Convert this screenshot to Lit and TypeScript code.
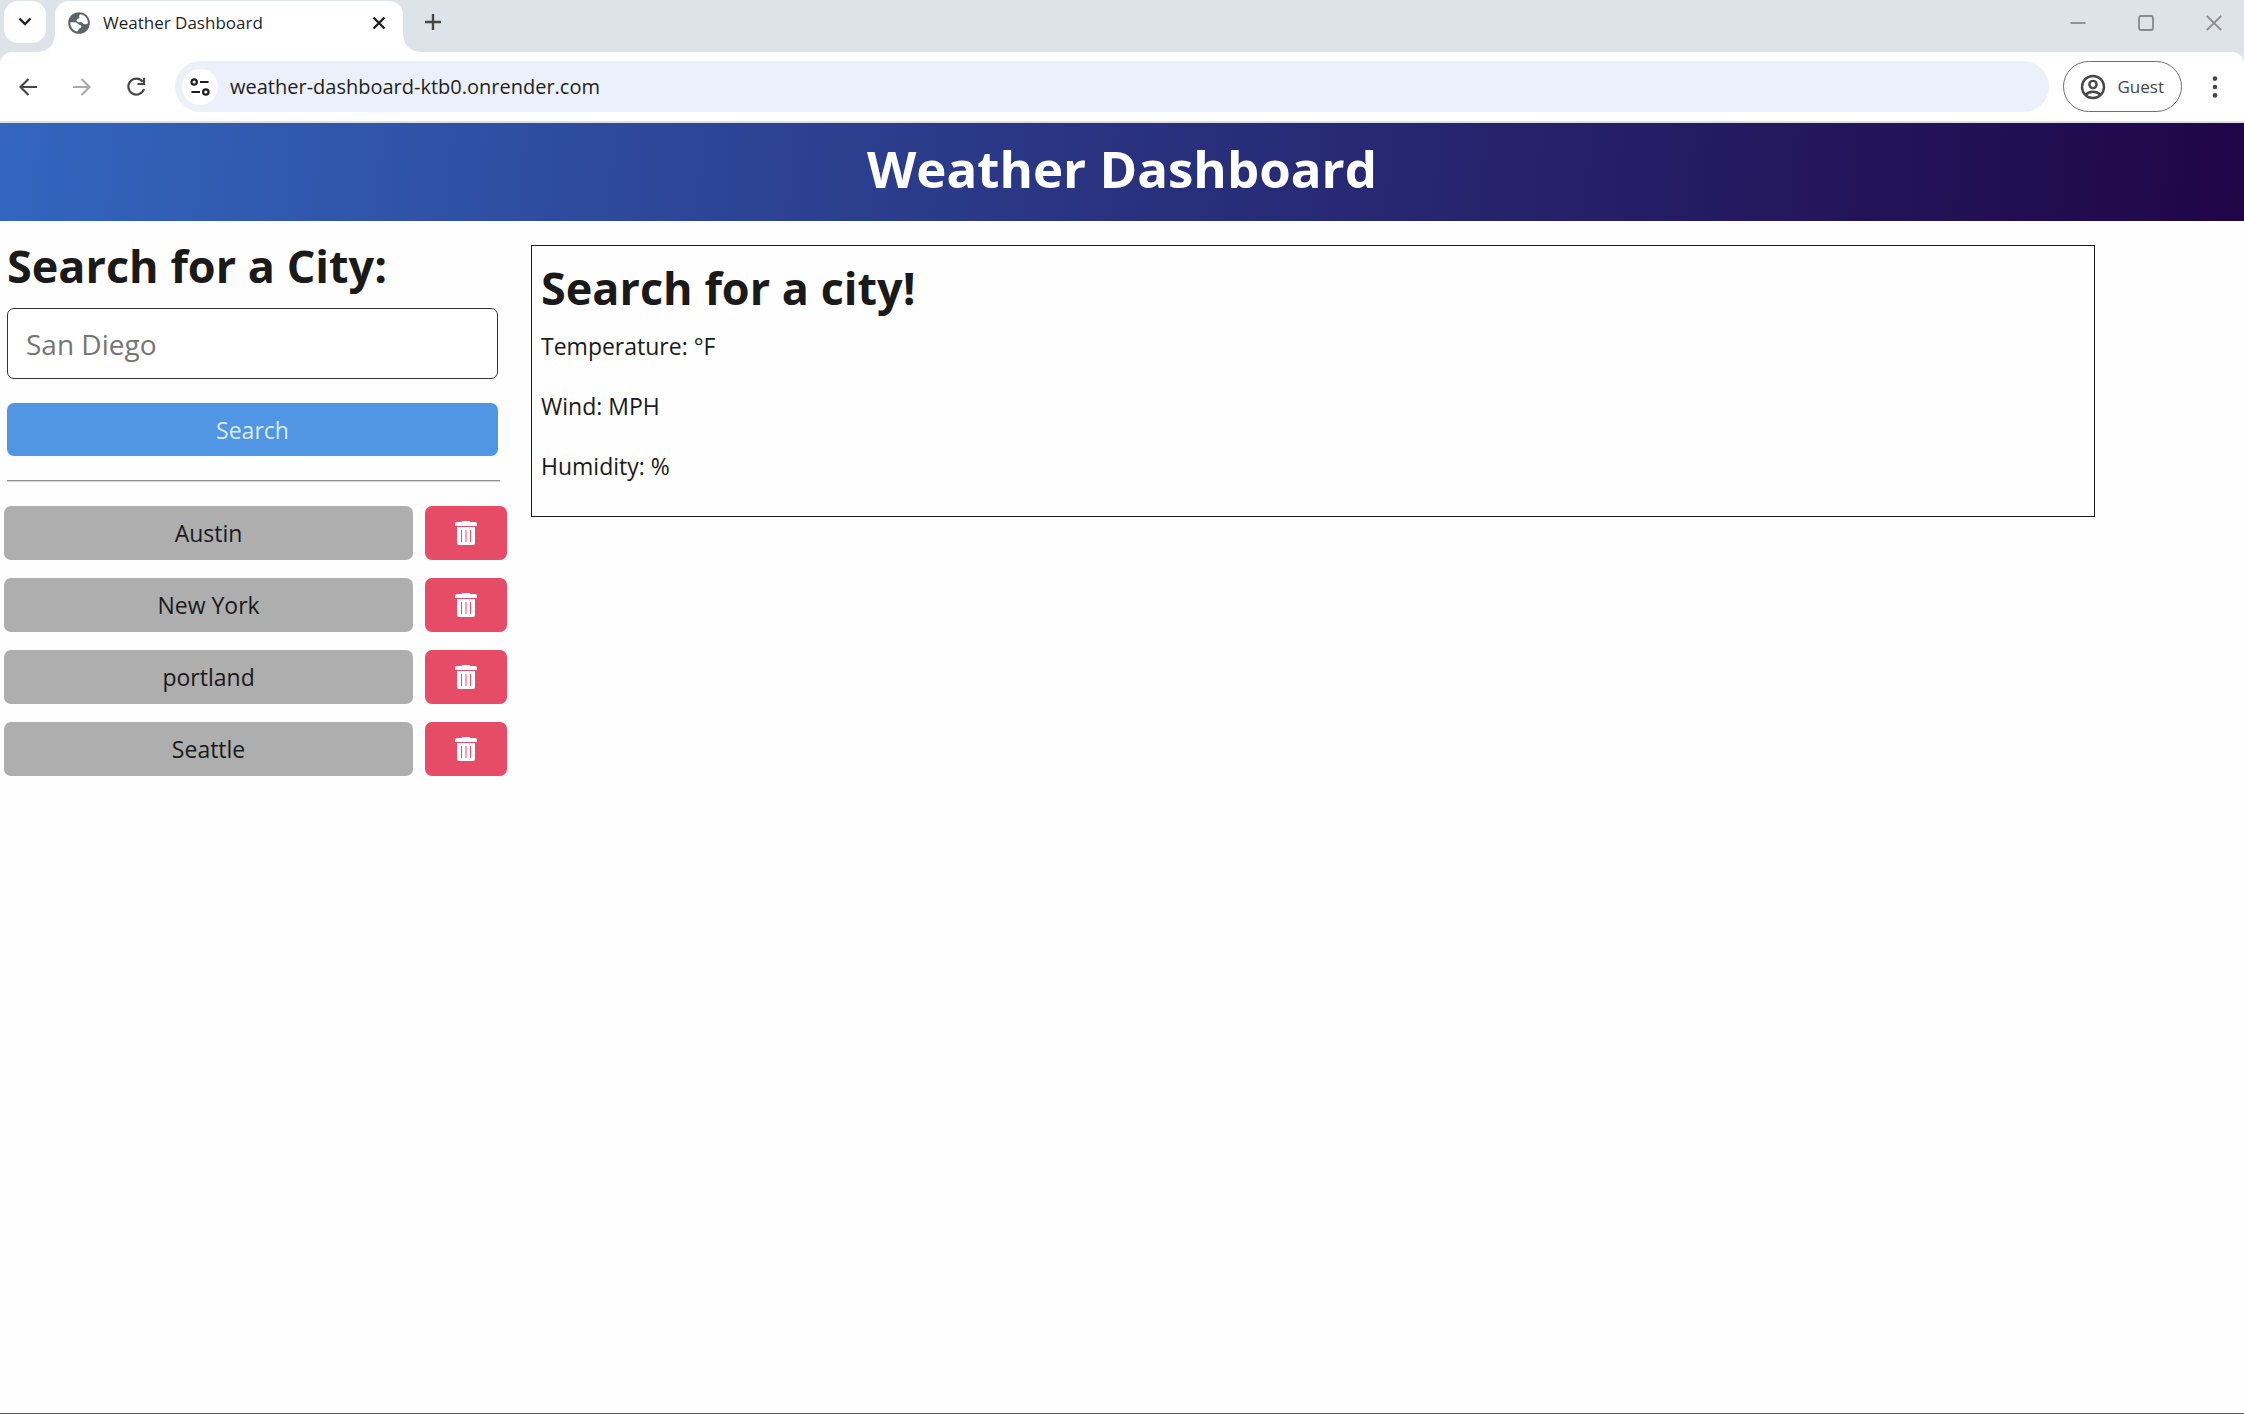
import { LitElement, html, css, svg } from "lit";
import { customElement, state } from "lit/decorators.js";

const FONT = css`"Segoe UI", "Open Sans", "Noto Sans", sans-serif`;

@customElement("browser-chrome")
class BrowserChrome extends LitElement {
  static styles = css`
    :host {
      display: block;
      font-family: ${FONT};
      background: #dee2e9;
    }
    button {
      border: 0;
      margin: 0;
      padding: 0;
      background: none;
      font: inherit;
      color: inherit;
      display: grid;
      place-items: center;
      flex: none;
    }
    svg {
      display: block;
    }
    .strip {
      display: flex;
      align-items: flex-start;
      height: 52px;
      padding-top: 1px;
      box-sizing: border-box;
    }
    .search-tabs {
      width: 42px;
      height: 42px;
      margin-left: 4px;
      border-radius: 14px;
      background: #fff;
    }
    .tab {
      position: relative;
      display: flex;
      align-items: center;
      box-sizing: border-box;
      width: 348px;
      height: 51px;
      margin-left: 9px;
      padding: 0 12px 8px 12px;
      border-radius: 14px 14px 0 0;
      background: #fff;
      font-size: 17px;
      color: #1f1f1f;
    }
    .tab::before,
    .tab::after {
      content: "";
      position: absolute;
      bottom: 0;
      width: 16px;
      height: 16px;
    }
    .tab::before {
      right: 100%;
      background: radial-gradient(circle at 0 0, transparent 15px, #fff 16px);
    }
    .tab::after {
      left: 100%;
      background: radial-gradient(circle at 100% 0, transparent 15px, #fff 16px);
    }
    .title {
      flex: 1;
      margin-left: 12px;
    }
    .close {
      width: 24px;
      height: 24px;
    }
    .new-tab {
      width: 42px;
      height: 42px;
      margin-left: 9px;
    }
    .window {
      display: flex;
      gap: 8px;
      margin-left: auto;
    }
    .window button {
      width: 60px;
      height: 44px;
    }
    .bar {
      display: flex;
      align-items: center;
      height: 69px;
      background: #fff;
      border-radius: 12px 12px 0 0;
      border-bottom: 2px solid #dfe1e0;
    }
    .nav {
      display: flex;
      gap: 12px;
      margin-left: 7px;
    }
    .nav button {
      width: 42px;
      height: 42px;
    }
    .address {
      flex: 1;
      display: flex;
      align-items: center;
      height: 51px;
      margin-left: 18px;
      border-radius: 26px;
      background: #ebf0fa;
    }
    .site {
      width: 36px;
      height: 36px;
      margin-left: 7px;
      border-radius: 50%;
      background: #fff;
    }
    .url {
      flex: 1;
      min-width: 0;
      margin-left: 12px;
      padding: 0;
      border: 0;
      outline: 0;
      background: none;
      font: inherit;
      font-size: 20px;
      color: #1f1f1f;
    }
    .guest {
      display: flex;
      align-items: center;
      gap: 12px;
      box-sizing: border-box;
      height: 51px;
      margin-left: 14px;
      padding: 0 17px 0 16px;
      border: 1px solid #6e6e6e;
      border-radius: 26px;
      font-size: 17px;
      color: #474747;
    }
    .menu {
      width: 42px;
      height: 42px;
      margin: 0 8px 0 12px;
    }
  `;

  render() {
    return html`
      <div class="strip">
        <button class="search-tabs" aria-label="Search tabs">
          <svg width="14" height="10" viewBox="0 0 14 10" fill="none" stroke="#1f1f1f" stroke-width="2.4">
            <path d="M1.5 1.5 7 7l5.5-5.5" />
          </svg>
        </button>
        <div class="tab">
          <svg width="24" height="24" viewBox="0 0 24 24" fill="none">
            <circle cx="12" cy="12" r="10.8" fill="#5f6368" />
            <path
              fill="#fff"
              d="M13.2 3.3c-1 .9-1.200 1.700-.9 2.700.3 1-.4 1.500-1.400 1.700-1 .2-1.500.9-1.300 1.900.2 1.100 1 1.700 2.200 1.700h2.400c1 0 1.500.8 2.300 1.500.7.6 1.600.5 2.500.4.8-.1 1.400-.4 2-.9.1-3.800-2-7-5.200-8.400-.8-.4-1.700-.6-2.600-.6z"
            />
            <path
              fill="#fff"
              d="M3.200 11.600c1.600-.4 4.300-.5 6.300.2 1.300.5 1.600 1.500 2.700 1.900 1.200.4 2.200.6 2.200 1.700s-1 1.700-1.900 2.100c-1 .5-.8 1.300-1.300 2.100-.3.500-.6.800-1.100 1-4-.9-6.900-4.600-6.900-9z"
            />
          </svg>
          <span class="title">Weather Dashboard</span>
          <button class="close" aria-label="Close tab">
            <svg width="14" height="14" viewBox="0 0 14 14" stroke="#1f1f1f" stroke-width="2.4">
              <path d="m1.5 1.500 11 11m0-11-11 11" />
            </svg>
          </button>
        </div>
        <button class="new-tab" aria-label="New tab">
          <svg width="16" height="16" viewBox="0 0 16 16" stroke="#474747" stroke-width="2.4">
            <path d="M8 0v16M0 8h16" />
          </svg>
        </button>
        <div class="window">
          <button aria-label="Minimize">
            <svg width="16" height="16" viewBox="0 0 16 16" stroke="#868a8e" stroke-width="1.8">
              <path d="M.5 8h15" />
            </svg>
          </button>
          <button aria-label="Maximize">
            <svg width="16" height="16" viewBox="0 0 16 16" fill="none" stroke="#868a8e" stroke-width="1.8">
              <rect x="1" y="1" width="14" height="14" rx="2" />
            </svg>
          </button>
          <button aria-label="Close window">
            <svg width="16" height="16" viewBox="0 0 16 16" stroke="#868a8e" stroke-width="1.8">
              <path d="m.8.8 14.400 14.400m0-14.400L.8 15.200" />
            </svg>
          </button>
        </div>
      </div>
      <div class="bar">
        <div class="nav">
          <button aria-label="Back">
            <svg width="18" height="18" viewBox="0 0 18 18" fill="none" stroke="#474747" stroke-width="2.2">
              <path d="M18 9H2M9.500 1 1.500 9l8 8" />
            </svg>
          </button>
          <button aria-label="Forward" disabled>
            <svg width="18" height="18" viewBox="0 0 18 18" fill="none" stroke="#a9a9a9" stroke-width="2.2">
              <path d="M0 9h16M8.500 1l8 8-8 8" />
            </svg>
          </button>
          <button aria-label="Reload">
            <svg width="20" height="20" viewBox="0 0 20 20" fill="none" stroke="#474747" stroke-width="2.2">
              <path d="M16.800 4.800A8 8 0 1 0 18 12M18 .8V7h-6.500" />
            </svg>
          </button>
        </div>
        <div class="address">
          <button class="site" aria-label="Site information">
            <svg width="20" height="18" viewBox="0 0 20 18" fill="none" stroke="#1f1f1f" stroke-width="2.2">
              <circle cx="4.2" cy="4" r="2.7" />
              <path d="M10 4h8.500M1.500 14H10" />
              <circle cx="15.8" cy="14" r="2.7" />
            </svg>
          </button>
          <input class="url" type="text" aria-label="Address" value="weather-dashboard-ktb0.onrender.com" />
        </div>
        <button class="guest">
          <svg width="26" height="26" viewBox="0 0 26 26" fill="none" stroke="#474747" stroke-width="2.4">
            <circle cx="13" cy="13" r="11" />
            <circle cx="13" cy="10.5" r="3.6" />
            <path d="M5.500 20.800C7.500 18.800 10 17.800 13 17.800s5.500 1 7.500 3" />
          </svg>
          Guest
        </button>
        <button class="menu" aria-label="Menu">
          <svg width="6" height="22" viewBox="0 0 6 22" fill="#474747">
            <circle cx="3" cy="2.6" r="2.3" />
            <circle cx="3" cy="11" r="2.3" />
            <circle cx="3" cy="19.4" r="2.3" />
          </svg>
        </button>
      </div>
    `;
  }
}

@customElement("city-search")
class CitySearch extends LitElement {
  static styles = css`
    :host {
      display: block;
      font-family: ${FONT};
      color: #1a1a1a;
    }
    form {
      margin: 0;
      padding: 0 9px 0 7px;
    }
    label {
      display: block;
      font-size: 45px;
      line-height: 56px;
      font-weight: 700;
      white-space: nowrap;
    }
    .city-input {
      display: block;
      box-sizing: border-box;
      width: 100%;
      height: 71px;
      margin: 14px 0 24px;
      padding: 0 18px;
      border: 1px solid #333;
      border-radius: 7px;
      background: #fff;
      font: inherit;
      font-size: 28px;
      color: #1a1a1a;
    }
    .city-input::placeholder {
      color: #757575;
    }
    button {
      border: 0;
      margin: 0;
      padding: 0;
      border-radius: 7px;
      font: inherit;
      font-size: 23px;
      color: inherit;
    }
    .submit {
      display: block;
      width: 100%;
      height: 53px;
      background: #5096e5;
      color: #dcebea;
    }
    hr {
      margin: 24px 7px;
      border: 0;
      border-top: 1px solid #8f8f8f;
      border-bottom: 1px solid #d8d8d8;
    }
    ul {
      display: grid;
      gap: 18px;
      margin: 0;
      padding: 0 0 0 4px;
      list-style: none;
    }
    li {
      display: grid;
      grid-template-columns: 5fr 1fr;
      gap: 12px;
    }
    .city {
      height: 54px;
      background: #aeaeae;
    }
    .remove {
      display: grid;
      place-items: center;
      background: #e64c65;
    }
  `;

  @state() cities = ["Austin", "New York", "portland", "Seattle"];

  private trash() {
    return svg`<svg width="22" height="24" viewBox="0 0 22 24" fill="#fff">
      <path d="M7.500 0h7l.8 1H20a2 2 0 0 1 2 2v2H0V3a2 2 0 0 1 2-2h4.700z" />
      <path fill-rule="evenodd" d="M2 6h18v16a2 2 0 0 1-2 2H4a2 2 0 0 1-2-2zM6 9v12h1V9zM10.500 9v12h1V9zM15 9v12h1V9z" />
    </svg>`;
  }

  render() {
    return html`
      <form @submit=${(e: Event) => e.preventDefault()}>
        <label for="city">Search for a City:</label>
        <input class="city-input" id="city" type="text" placeholder="San Diego" />
        <button class="submit" type="submit">Search</button>
      </form>
      <hr />
      <ul>
        ${this.cities.map(
          (city) => html`<li>
            <button class="city" type="button">${city}</button>
            <button
              class="remove"
              type="button"
              aria-label="Delete ${city}"
              @click=${() => (this.cities = this.cities.filter((c) => c !== city))}
            >
              ${this.trash()}
            </button>
          </li>`
        )}
      </ul>
    `;
  }
}

@customElement("app-root")
class AppRoot extends LitElement {
  static styles = css`
    :host {
      display: flex;
      flex-direction: column;
      box-sizing: border-box;
      min-height: 100vh;
      border-bottom: 1px solid #3d6b6b;
      background: #fefefe;
      font-family: ${FONT};
      color: #1a1a1a;
    }
    h1,
    h2,
    p {
      margin: 0;
    }
    .banner {
      padding: 9px 0 17px;
      background: linear-gradient(95deg, #3366bf, #29327f 50%, #200547);
      text-align: center;
      color: #fff;
    }
    h1 {
      font-size: 51px;
      line-height: 72px;
    }
    main {
      display: grid;
      grid-template-columns: 507px 1fr;
      align-items: start;
      gap: 24px;
      padding: 17px 149px 0 0;
    }
    .today {
      box-sizing: border-box;
      margin-top: 7px;
      padding: 15px 9px 32px;
      border: 1px solid #1a1a1a;
    }
    h2 {
      font-size: 45px;
      line-height: 54px;
    }
    p {
      font-size: 23px;
      line-height: 36px;
    }
    .readings {
      display: grid;
      gap: 24px;
      padding-top: 13px;
    }
  `;

  render() {
    return html`
      <browser-chrome></browser-chrome>
      <header class="banner"><h1>Weather Dashboard</h1></header>
      <main>
        <city-search></city-search>
        <section class="today">
          <h2>Search for a city!</h2>
          <div class="readings">
            <p>Temperature: °F</p>
            <p>Wind: MPH</p>
            <p>Humidity: %</p>
          </div>
        </section>
      </main>
    `;
  }
}
